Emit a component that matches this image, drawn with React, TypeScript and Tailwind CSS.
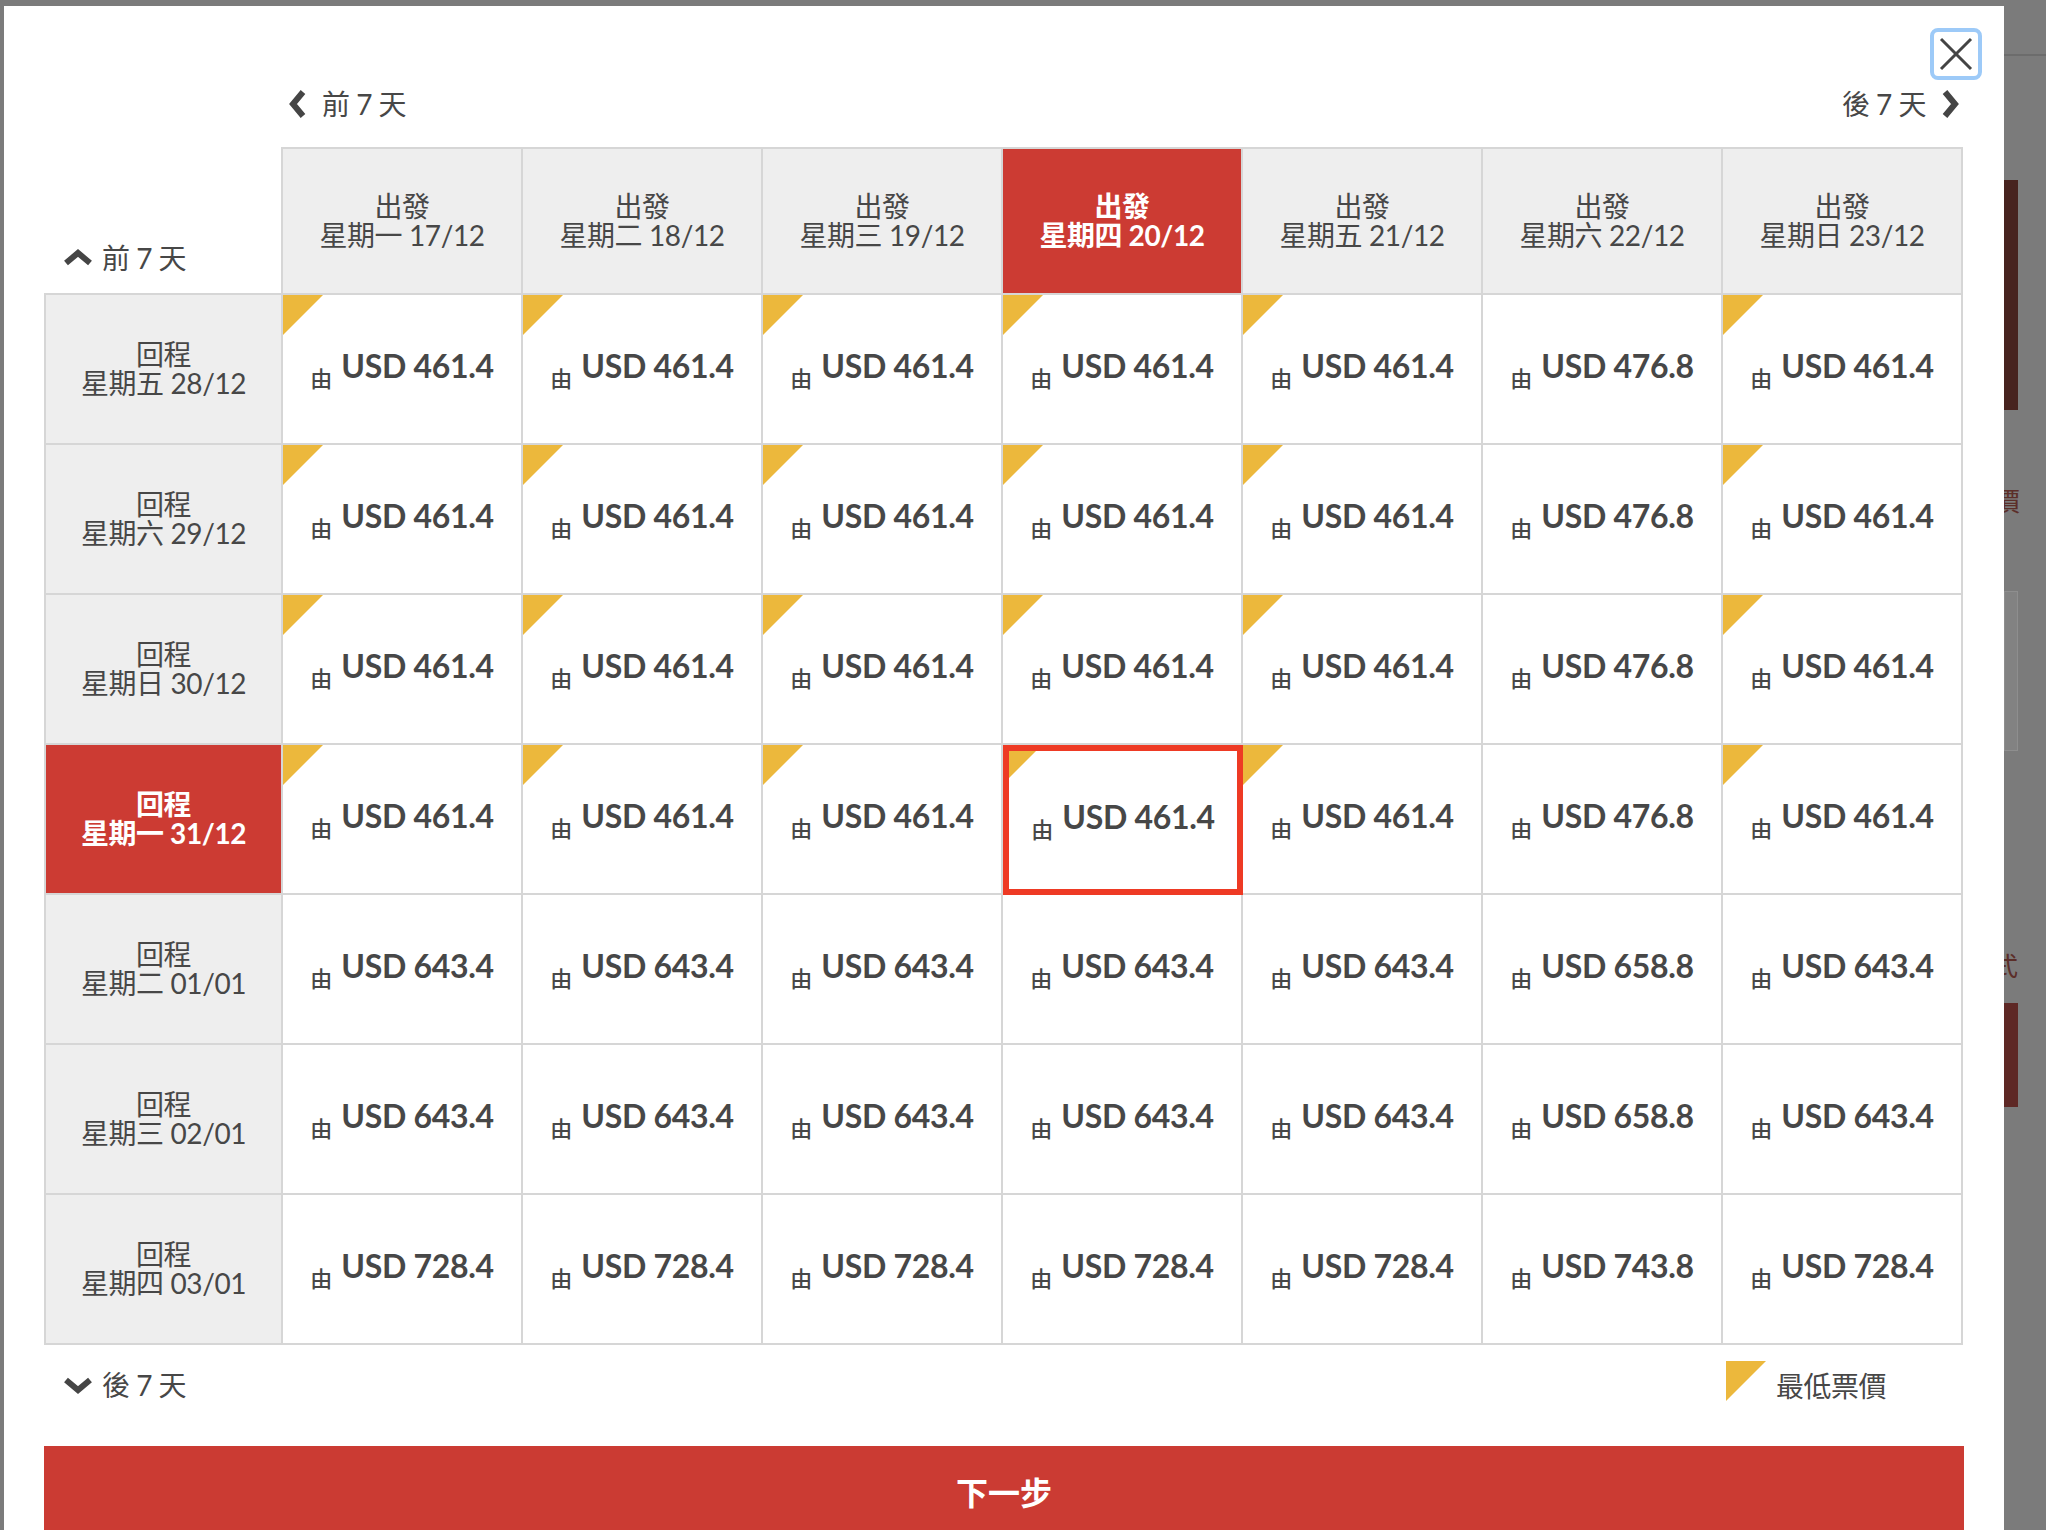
import * as React from "react"

const departs = [
  { day: "星期一", date: "17/12" },
  { day: "星期二", date: "18/12" },
  { day: "星期三", date: "19/12" },
  { day: "星期四", date: "20/12" },
  { day: "星期五", date: "21/12" },
  { day: "星期六", date: "22/12" },
  { day: "星期日", date: "23/12" },
]

const returns = [
  { day: "星期五", date: "28/12", base: "461.4", alt: "476.8", cheap: true },
  { day: "星期六", date: "29/12", base: "461.4", alt: "476.8", cheap: true },
  { day: "星期日", date: "30/12", base: "461.4", alt: "476.8", cheap: true },
  { day: "星期一", date: "31/12", base: "461.4", alt: "476.8", cheap: true },
  { day: "星期二", date: "01/01", base: "643.4", alt: "658.8", cheap: false },
  { day: "星期三", date: "02/01", base: "643.4", alt: "658.8", cheap: false },
  { day: "星期四", date: "03/01", base: "728.4", alt: "743.8", cheap: false },
]

const SEL_COL = 3
const SEL_ROW = 3

function Chevron({ dir, className }: { dir: "left" | "right" | "up" | "down"; className?: string }) {
  const pts = {
    left: "15,3 5,15 15,27",
    right: "5,3 15,15 5,27",
    up: "3,15 15,5 27,15",
    down: "3,5 15,15 27,5",
  }[dir]
  const box = dir === "left" || dir === "right" ? "0 0 20 30" : "0 0 30 20"
  return (
    <svg viewBox={box} className={className} fill="none">
      <polyline points={pts} stroke="#454545" strokeWidth="6" strokeLinejoin="miter" />
    </svg>
  )
}

function Corner({ size }: { size: string }) {
  return <span className={`absolute left-0 top-0 w-0 h-0 border-r-transparent border-t-[#ecb83c] ${size}`} />
}

function PriceCell({ price, cheap, selected }: { price: string; cheap: boolean; selected: boolean }) {
  return (
    <div
      className={`relative flex items-center justify-center bg-white ${
        selected ? "border-[6px] border-[#ee3a24]" : "border-r-2 border-b-2 border-[#d6d6d6]"
      }`}
    >
      {cheap && <Corner size={selected ? "border-t-[27px] border-r-[27px]" : "border-t-[40px] border-r-[40px]"} />}
      <div className="flex items-baseline text-[#474747] -mt-[2px]">
        <span className="text-[22px] font-medium mr-[9px] translate-y-[9px]">由</span>
        <span className="text-[32px] font-bold leading-none tracking-[-0.3px]">USD {price}</span>
      </div>
    </div>
  )
}

export default function App() {
  return (
    <div className="flex h-[1530px] overflow-hidden bg-[#7b7b7b] pt-[6px] pl-[4px] font-[Lato,'Noto_Sans_CJK_TC',sans-serif]">
      {/* modal */}
      <div className="relative w-[2000px] shrink-0 bg-white px-[40px]">
        <button className="absolute right-[22px] top-[22px] w-[52px] h-[52px] rounded-[8px] border-[4px] border-[#9dcaf8] bg-white flex items-center justify-center">
          <svg viewBox="0 0 34 34" className="w-[34px] h-[34px]">
            <line x1="2" y1="2" x2="32" y2="32" stroke="#444" strokeWidth="3" />
            <line x1="32" y1="2" x2="2" y2="32" stroke="#444" strokeWidth="3" />
          </svg>
        </button>

        {/* week navigation */}
        <div className="h-[141px] pt-[80px]">
          <div className="flex h-[36px] items-center justify-between pl-[244px] pr-[4px] text-[28px] text-[#474747] tracking-[-0.5px]">
            <div className="flex items-center gap-[14px]">
              <Chevron dir="left" className="w-[20px] h-[30px]" />
              <span>前 7 天</span>
            </div>
            <div className="flex items-center gap-[14px]">
              <span>後 7 天</span>
              <Chevron dir="right" className="w-[20px] h-[30px]" />
            </div>
          </div>
        </div>

        {/* fare grid */}
        <div className="grid grid-cols-[239px_repeat(7,240px)] grid-rows-[148px_repeat(7,150px)]">
          <div className="flex items-end border-r-2 border-b-2 border-[#d6d6d6] pb-[14px] pl-[19px] text-[28px] text-[#474747] tracking-[-0.5px]">
            <div className="flex items-center gap-[9px]">
              <Chevron dir="up" className="w-[30px] h-[20px]" />
              <span>前 7 天</span>
            </div>
          </div>
          {departs.map((d, i) => {
            const sel = i === SEL_COL
            return (
              <div
                key={d.date}
                className={`flex flex-col items-center justify-center border-t-2 border-r-2 border-b-2 border-[#d6d6d6] text-[28px] leading-[29px] tracking-[-0.4px] ${
                  sel ? "bg-[#cc3b33] text-white font-bold" : "bg-[#eeeeee] text-[#474747]"
                }`}
              >
                <span>出發</span>
                <span>
                  {d.day} {d.date}
                </span>
              </div>
            )
          })}

          {returns.map((r, ri) => {
            const selRow = ri === SEL_ROW
            return (
              <React.Fragment key={r.date}>
                <div
                  className={`flex flex-col items-center justify-center border-l-2 border-r-2 border-b-2 border-[#d6d6d6] text-[28px] leading-[29px] tracking-[-0.4px] ${
                    selRow ? "bg-[#cc3b33] text-white font-bold" : "bg-[#eeeeee] text-[#474747]"
                  }`}
                >
                  <span>回程</span>
                  <span>
                    {r.day} {r.date}
                  </span>
                </div>
                {departs.map((d, ci) => (
                  <PriceCell
                    key={d.date}
                    price={ci === 5 ? r.alt : r.base}
                    cheap={r.cheap && ci !== 5}
                    selected={selRow && ci === SEL_COL}
                  />
                ))}
              </React.Fragment>
            )
          })}
        </div>

        {/* footer */}
        <div className="flex h-[101px] items-start pt-[16px] text-[28px] text-[#474747] tracking-[-0.5px]">
          <div className="mt-[6px] flex h-[36px] items-center gap-[9px] pl-[19px]">
            <Chevron dir="down" className="w-[30px] h-[20px]" />
            <span>後 7 天</span>
          </div>
          <div className="ml-auto mr-[78px] flex items-start gap-[10px]">
            <span className="w-0 h-0 border-t-[40px] border-r-[40px] border-t-[#ecb83c] border-r-transparent" />
            <span className="mt-[7px] leading-[36px]">最低票價</span>
          </div>
        </div>

        <button className="flex h-[94px] w-full items-center justify-center bg-[#cb3b33] text-[32px] font-bold text-white">
          下一步
        </button>
      </div>

      {/* page behind the overlay */}
      <div className="flex-1 flex flex-col">
        <div className="mt-[48px] h-[2px] bg-[#6c6c6c]" />
        <div className="mt-[124px] h-[230px] w-[14px] bg-[#47231f]" />
        <div className="mt-[76px] -ml-[10px] text-[26px] leading-[30px] text-[#5b2e29]">價</div>
        <div className="mt-[75px] h-[160px] w-[14px] border border-[#8e8e8e] bg-[#828282]" />
        <div className="mt-[200px] -ml-[12px] text-[26px] leading-[30px] text-[#5b2e29]">式</div>
        <div className="mt-[22px] h-[104px] w-[14px] bg-[#5e2825]" />
      </div>
    </div>
  )
}
